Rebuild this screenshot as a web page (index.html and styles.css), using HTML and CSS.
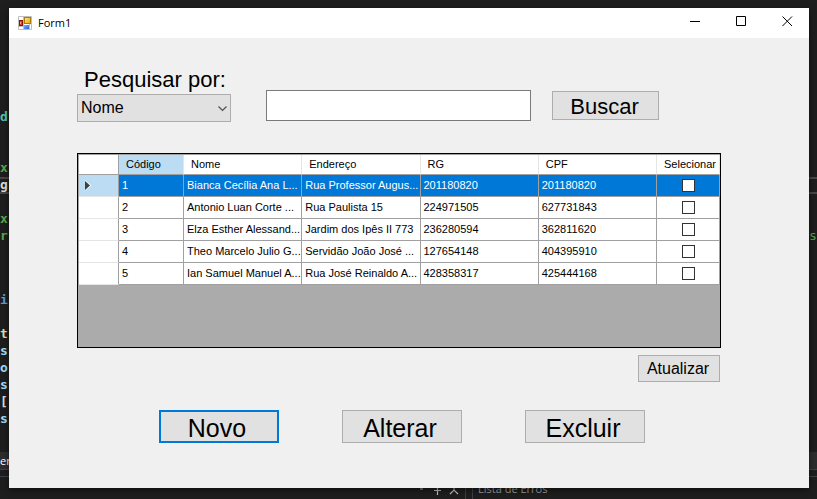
FILE: index.html
```html
<!DOCTYPE html>
<html lang="pt-BR">
<head>
<meta charset="utf-8">
<title>Form1</title>
<link rel="stylesheet" href="styles.css">
</head>
<body>
<div class="desktop">
  <div class="editor" aria-hidden="true">
    <div class="current-line"></div>
    <div class="code code-left">
      <span class="type">d</span>
      <span></span>
      <span></span>
      <span class="comment">x</span>
      <span class="plain">g</span>
      <span></span>
      <span class="comment">x</span>
      <span class="comment">r</span>
      <span></span>
      <span></span>
      <span class="lens"></span>
      <span class="keyword">i</span>
      <span></span>
      <span class="method">t</span>
      <span class="local">s</span>
      <span class="local">o</span>
      <span class="local">s</span>
      <span class="plain">[</span>
      <span class="local">s</span>
    </div>
    <div class="code code-right"><span class="comment">se</span></div>
    <div class="status-strip"><span>er</span></div>
    <div class="panel-line"></div>
    <div class="panel-tools">
      <svg width="42" height="12" viewBox="0 0 42 12"><path d="M3 2h3M17 3.500h7M20.500 0v8M33 7l4-4 4 4M37 3V0" fill="none" stroke="#bdbdbd" stroke-width="1.200"/></svg>
    </div>
    <div class="panel-tab">Lista de Erros</div>
  </div>

  <main class="window">
    <header class="titlebar">
      <svg class="app-icon" width="14" height="14" viewBox="0 0 14 14">
        <defs>
          <linearGradient id="gold" x1="0" y1="0" x2="1" y2="1"><stop offset="0" stop-color="#ffe98a"/><stop offset="1" stop-color="#e0a800"/></linearGradient>
          <linearGradient id="blue" x1="0" y1="0" x2="1" y2="1"><stop offset="0" stop-color="#7fb0ff"/><stop offset="1" stop-color="#2a62d0"/></linearGradient>
        </defs>
        <path d="M.5.5h13v13H.5zM5.500 0v14M0 4.500h5M0 10.500h5M11.500 8v6" fill="#fff" stroke="#bebebe"/>
        <rect x="6.500" y="1.500" width="6" height="6" fill="url(#gold)" stroke="#b07a00"/>
        <rect x="1.500" y="4.500" width="3" height="5" fill="#d8432f" stroke="#8f1408"/>
        <rect x="2" y="6" width="1" height="2" fill="#f6a090"/>
        <rect x="6" y="9" width="5" height="4" fill="url(#blue)"/>
      </svg>
      <h1>Form1</h1>
      <div class="window-controls">
        <button type="button" aria-label="Minimizar"><svg width="11" height="11" viewBox="0 0 11 11"><path d="M0 5.500h10" stroke="#000"/></svg></button>
        <button type="button" aria-label="Maximizar"><svg width="11" height="11" viewBox="0 0 11 11"><path d="M.5.5h9v9h-9z" fill="none" stroke="#000"/></svg></button>
        <button type="button" aria-label="Fechar"><svg width="11" height="11" viewBox="0 0 11 11"><path d="M.5.5l9.500 9.500M10 .5L.5 10" fill="none" stroke="#000"/></svg></button>
      </div>
    </header>

    <div class="client">
      <form class="search">
        <div class="search-field">
          <label for="campo">Pesquisar por:</label>
          <div class="combo">
            <select id="campo"><option>Nome</option></select>
            <svg class="chevron" width="9" height="6" viewBox="0 0 9 6"><path d="M.5.5l4 4 4-4" fill="none" stroke="#505050" stroke-width="1.200"/></svg>
          </div>
        </div>
        <div class="search-query">
          <input type="text" aria-label="Texto da pesquisa">
          <button class="button button-search" type="button">Buscar</button>
        </div>
      </form>

      <div class="grid-frame">
        <table class="grid">
          <colgroup><col class="col-marker"><col class="col-code"><col><col><col><col><col class="col-select"></colgroup>
          <thead>
            <tr><th></th><th class="active">Código</th><th>Nome</th><th>Endereço</th><th>RG</th><th>CPF</th><th>Selecionar</th></tr>
          </thead>
          <tbody>
            <tr class="selected"><th scope="row"><svg class="marker" width="8" height="11" viewBox="0 0 8 11"><path d="M1 0v11L7.500 5.500z" fill="#f4f4f4"/><path d="M1 1v9l5-4.500z" fill="#404040"/></svg></th><td>1</td><td>Bianca Cecília Ana L...</td><td>Rua Professor Augus...</td><td>201180820</td><td>201180820</td><td class="check"><input type="checkbox" aria-label="Selecionar 1"></td></tr>
            <tr><th scope="row"></th><td>2</td><td>Antonio Luan Corte ...</td><td>Rua Paulista 15</td><td>224971505</td><td>627731843</td><td class="check"><input type="checkbox" aria-label="Selecionar 2"></td></tr>
            <tr><th scope="row"></th><td>3</td><td>Elza Esther Alessand...</td><td>Jardim dos Ipês II 773</td><td>236280594</td><td>362811620</td><td class="check"><input type="checkbox" aria-label="Selecionar 3"></td></tr>
            <tr><th scope="row"></th><td>4</td><td>Theo Marcelo Julio G...</td><td>Servidão João José ...</td><td>127654148</td><td>404395910</td><td class="check"><input type="checkbox" aria-label="Selecionar 4"></td></tr>
            <tr><th scope="row"></th><td>5</td><td>Ian Samuel Manuel A...</td><td>Rua José Reinaldo A...</td><td>428358317</td><td>425444168</td><td class="check"><input type="checkbox" aria-label="Selecionar 5"></td></tr>
          </tbody>
        </table>
      </div>

      <div class="refresh"><button class="button button-refresh" type="button">Atualizar</button></div>

      <div class="actions">
        <button class="button button-large button-default" type="button">Novo</button>
        <button class="button button-large" type="button">Alterar</button>
        <button class="button button-large" type="button">Excluir</button>
      </div>
    </div>
  </main>
</div>
</body>
</html>
```
FILE: styles.css
```css
* {
  box-sizing: border-box;
}

body {
  margin: 0;
  background: #1e1e1e;
  color: #000;
  font-family: "Liberation Sans", Arial, sans-serif;
}

.desktop {
  position: relative;
  min-height: 100vh;
  padding: 8px 8px 11px 9px;
  overflow: hidden;
}

/* Editor that shows round the edges of the window */
.editor {
  position: absolute;
  inset: 0;
  overflow: hidden;
}

.current-line {
  position: absolute;
  top: 177px;
  width: 100%;
  height: 17px;
  border: solid #464646;
  border-width: 2px 0;
}

.code {
  position: absolute;
  display: flex;
  flex-direction: column;
  font: 13px/17px "DejaVu Sans Mono", monospace;
}

.code span {
  height: 17px;
}

.code .lens {
  height: 13px;
}

.code-left {
  top: 108px;
  left: 0;
  font-weight: bold;
}

.code-right {
  top: 227px;
  right: 0;
  width: 8px;
}

.type { color: #4ec9b0; }
.comment { color: #57a64a; }
.plain { color: #dcdcdc; }
.keyword { color: #569cd6; }
.method { color: #dcdcaa; }
.local { color: #9cdcfe; }

.status-strip {
  position: absolute;
  top: 452px;
  width: 100%;
  height: 18px;
  border-bottom: 1px solid #3f3f46;
  background: #2d2d30;
  color: #fff;
  font: 11px/17px "Open Sans", sans-serif;
}

.status-strip span {
  display: block;
}

.panel-line {
  position: absolute;
  top: 476px;
  bottom: 0;
  width: 100%;
  border-top: 1px solid #3f3f46;
}

.panel-tools {
  position: absolute;
  top: 485px;
  left: 417px;
  width: 49px;
  height: 14px;
  border-right: 1px solid #3f3f46;
}

.panel-tab {
  position: absolute;
  top: 478px;
  left: 472px;
  padding-left: 5px;
  border-left: 1px solid #3f3f46;
  color: #a0a0a0;
  font: 11px/21px "Open Sans", sans-serif;
}

/* Window */
.window {
  position: relative;
  background: #f0f0f0;
  box-shadow: 0 2px 6px #0008;
}

.titlebar {
  display: flex;
  align-items: center;
  height: 30px;
  padding-left: 9px;
  background: #fff;
}

.titlebar h1 {
  flex: 1;
  margin: 0 0 0 6px;
  font: 11px/30px "Open Sans", sans-serif;
}

.app-icon {
  display: block;
}

.window-controls {
  display: flex;
}

.window-controls button {
  display: grid;
  place-items: center;
  width: 46px;
  height: 30px;
  padding: 0 0 3px 3px;
  border: 0;
  background: none;
}

.client {
  padding: 28px 88px 45px 68px;
}

.search {
  display: flex;
  align-items: flex-end;
  gap: 35px;
  padding-right: 62px;
}

.search label {
  display: block;
  margin: 2px 0 2px 7px;
  font-size: 22px;
  line-height: 24px;
}

.combo {
  position: relative;
  width: 154px;
}

.combo select {
  appearance: none;
  display: block;
  width: 100%;
  height: 28px;
  padding: 0 3px;
  border: 1px solid #adadad;
  border-radius: 0;
  background: #e1e1e1;
  color: #000;
  font: 16px/26px "Liberation Sans", Arial, sans-serif;
}

.chevron {
  position: absolute;
  top: 12px;
  right: 4px;
  pointer-events: none;
}

.search-query {
  display: flex;
  flex: 1;
  align-items: center;
  gap: 21px;
  min-width: 0;
  padding-bottom: 1px;
}

.search-query input {
  flex: 1;
  min-width: 0;
  height: 31px;
  padding: 0 4px;
  border: 1px solid #7a7a7a;
  background: #fff;
  font: 22px "Liberation Sans", Arial, sans-serif;
}

.button {
  padding: 0;
  border: 1px solid #adadad;
  background: #e1e1e1;
  color: #000;
  font-family: "Liberation Sans", Arial, sans-serif;
}

.button-search {
  width: 107px;
  height: 29px;
  padding: 3px 2px 0 0;
  font-size: 22px;
  line-height: 24px;
}

.button-refresh {
  width: 82px;
  height: 27px;
  padding-right: 2px;
  font-size: 16px;
  line-height: 25px;
}

.button-large {
  width: 120px;
  height: 33px;
  padding: 3px 4px 0 0;
  font-size: 25px;
  line-height: 27px;
}

.button-default {
  border: 2px solid #0078d7;
}

/* Data grid */
.grid-frame {
  min-height: 195px;
  margin-top: 31px;
  border: 1px solid #000;
  background: #ababab;
}

.grid {
  width: 100%;
  border-top: 1px solid #a0a0a0;
  border-left: 1px solid #a0a0a0;
  border-spacing: 0;
  table-layout: fixed;
  background: #fff;
  font-size: 11px;
  line-height: 13px;
}

.col-marker { width: 40px; }
.col-code { width: 65px; }
.col-select { width: 63px; }

.grid th,
.grid td {
  overflow: hidden;
  height: 22px;
  padding: 0 0 0 3px;
  border: solid #a0a0a0;
  border-width: 0 1px 1px 0;
  font-weight: normal;
  text-align: left;
  white-space: nowrap;
}

.grid thead th {
  height: 20px;
  padding-left: 7px;
  border-right-color: #e5e5e5;
}

.grid tbody th {
  padding-left: 5px;
  border-bottom-color: #e5e5e5;
}

.grid thead th:first-child {
  border-right-color: #a0a0a0;
}

.grid .active,
.grid .selected th {
  background: #bcdcf4;
}

.grid .selected td {
  background: #0078d7;
  color: #fff;
}

.grid .check {
  padding: 0;
  text-align: center;
}

.marker {
  display: block;
}

.check input {
  appearance: none;
  display: block;
  width: 13px;
  height: 13px;
  margin: 0 auto;
  border: 1px solid #333;
  background: #fff;
}

.refresh {
  display: flex;
  justify-content: flex-end;
  margin-top: 7px;
  padding-right: 1px;
}

.actions {
  display: flex;
  gap: 63px;
  margin-top: 28px;
  padding-left: 82px;
}
```
